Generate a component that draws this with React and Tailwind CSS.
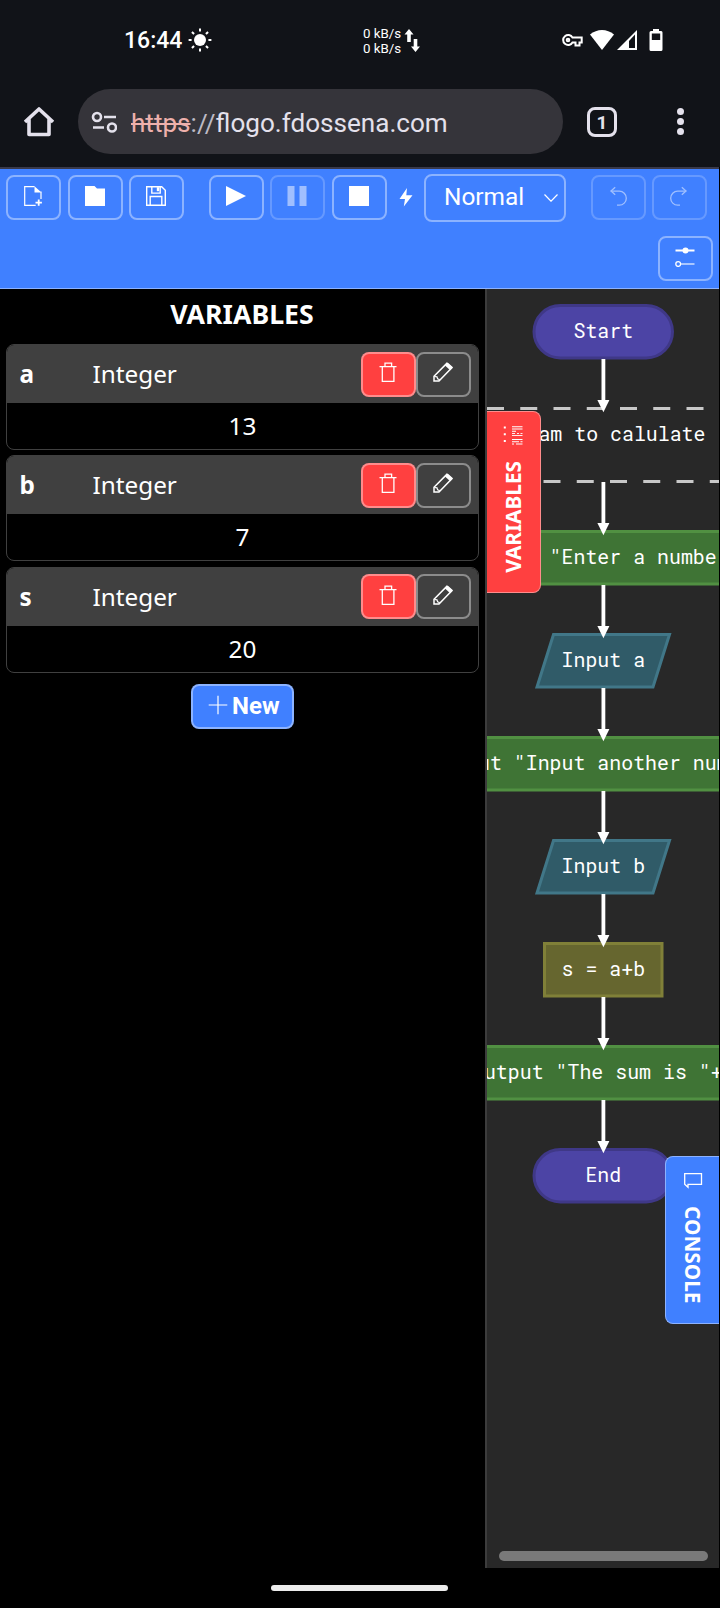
import React from "react";

const paths = {
  file: (
    <g fill="none" stroke="currentColor" strokeWidth="1.2">
      <path d="M11.500 .7H1.700v18.600h11M18 13V5.500" />
      <path d="M11.500 .2v6.200h7z" fill="currentColor" stroke="none" />
      <path d="M15.700 13.500v6.300M12.500 16.600h6.400" strokeWidth="1.8" />
    </g>
  ),
  folder: <path d="M0 0h9.500l2.500 2.500h8V20H0z" fill="currentColor" />,
  save: (
    <g fill="none" stroke="currentColor" strokeWidth="1.4">
      <path d="M.7.7h15l3.600 3.600v15H.7z" />
      <path d="M5.800.7v6.400h8.400V.7M4.200 19.300v-8.800h11.600v8.800" />
      <path d="M10.800 1.200h2.400v4h-2.400z" fill="currentColor" stroke="none" />
    </g>
  ),
  play: <path d="M0 0l20 10L0 20z" fill="currentColor" />,
  pause: <path d="M.5 0h7v20h-7zM12.500 0h7v20h-7z" fill="currentColor" />,
  stop: <path d="M0 0h20v20H0z" fill="currentColor" />,
  undo: (
    <g fill="none" stroke="currentColor" strokeWidth="1.3">
      <path d="M2.800 5.200h8.500a7 7 0 0 1 0 14H9" />
      <path d="M7.200 1.200L3 5l4.200 3.800" />
    </g>
  ),
  redo: (
    <g fill="none" stroke="currentColor" strokeWidth="1.3">
      <path d="M17.200 5.200H8.700a7 7 0 0 0 0 14H11" />
      <path d="M12.800 1.200L17 5l-4.200 3.800" />
    </g>
  ),
  sliders: (
    <g fill="none" stroke="currentColor">
      <path d="M.5 3.500h19" strokeWidth="2" />
      <circle cx="10.500" cy="3.500" r="3" fill="currentColor" stroke="none" />
      <circle cx="3.200" cy="17" r="2.400" strokeWidth="1.300" />
      <path d="M5.600 17h13.900" strokeWidth="1.100" />
    </g>
  ),
  trash: (
    <g fill="none" stroke="currentColor" strokeWidth="1.3">
      <path d="M1.500 4.600h17M7 4.400V1.200h6.600v3.200M4.300 4.600v14.700h11.600V4.600" />
    </g>
  ),
  pencil: (
    <g fill="none" stroke="currentColor" strokeWidth="1.5">
      <path d="M1 19v-4.700L13.800 1.400l5 4.400L6 18.900z" />
      <path d="M12 3.400l2.600-3L20 5.200l-2.800 3z" fill="currentColor" stroke="none" />
      <path d="M1.400 14.500l2.600.3.6 2 1.600.6.2 1.400" strokeWidth="1.2" />
    </g>
  ),
  plus: <path d="M10 .7v18.600M.7 10h18.600" stroke="currentColor" strokeWidth="1.200" />,
};

function Icon({ name, className = "size-5" }) {
  return (
    <svg viewBox="0 0 20 20" className={className}>
      {paths[name]}
    </svg>
  );
}

function IconButton({ name, className = "", dim = false }) {
  return (
    <button
      className={`flex h-[45px] w-[55px] shrink-0 items-center justify-center rounded-lg border-2 pr-px pb-[4px] text-white ${
        dim ? "border-white/20" : "border-white/40"
      } ${className}`}
    >
      <span className={dim ? "opacity-50" : ""}>
        <Icon name={name} />
      </span>
    </button>
  );
}

function StatusBar() {
  return (
    <div className="flex h-20 items-center pl-[124px] pr-[57px] text-white">
      <span className="w-[59px] whitespace-nowrap pt-px text-[23px] leading-none font-medium">16:44</span>
      <svg viewBox="-12 -12 24 24" className="ml-[5px] size-6">
        <circle r="6" fill="#fff" />
        <g stroke="#fff" strokeWidth="2">
          {[0, 45, 90, 135, 180, 225, 270, 315].map((a) => (
            <path key={a} d="M8.400 0h3" transform={`rotate(${a})`} />
          ))}
        </g>
      </svg>
      <div className="ml-[151px] w-[38px] whitespace-nowrap pt-[2px] text-[13.300px] leading-[15px]">
        <div>0 kB/s</div>
        <div>0 kB/s</div>
      </div>
      <svg viewBox="0 0 17 24" className="ml-[3px] h-6 w-[17px]" fill="#fff">
        <path d="M5 1L9.500 6.500H6.800V14H3.200V6.500H0.500z" />
        <path d="M11.500 24L7 18.500H9.700V11H13.300V18.500H16z" />
      </svg>
      <div className="ml-auto flex items-center">
        <svg viewBox="0 0 21 14" className="h-[14px] w-[21px]" fill="none" stroke="#fff" strokeWidth="2">
          <path d="M10.500 4.500A5 5 0 1 0 10.500 9.500H13.500V12.500H17.500V9.500H19.700V4.500z" />
          <circle cx="6" cy="7" r="1.300" />
        </svg>
        <svg viewBox="0 0 24 20" className="ml-[7px] h-5 w-6" fill="#fff">
          <path d="M0 4.500C7-1.500 17-1.500 24 4.500L12 20z" />
        </svg>
        <svg viewBox="0 0 20 20" className="ml-[3px] size-5">
          <path d="M0 20L20 0V20z" fill="#fff" />
          <path d="M12 11L18 4.500V18H12z" fill="#111318" />
        </svg>
        <svg viewBox="0 0 14 22" className="ml-[12px] h-[22px] w-[14px]">
          <path d="M4 0h6v2h2.200q1.300 0 1.300 1.500v17q0 1.500-1.500 1.500h-10q-1.500 0-1.500-1.500v-17q0-1.500 1.500-1.500H4z" fill="#fff" />
          <path d="M2.800 4.500h8.400v6.500H2.800z" fill="#111318" />
        </svg>
      </div>
    </div>
  );
}

function AddressBar() {
  return (
    <div className="flex h-[87px] items-start pt-[9px] text-[#e4e1ec]">
      <svg viewBox="0 0 30 30" className="mt-[18px] ml-6 size-[30px]" fill="none" stroke="currentColor" strokeWidth="3.600" strokeLinejoin="round">
        <path d="M1 15L15 2l14 13M5 11.500V27.500H25V11.500" />
      </svg>
      <div className="ml-6 flex h-[65px] w-[485px] items-center rounded-full bg-[#35343a]">
        <svg viewBox="0 0 26 22" className="ml-[13px] h-[22px] w-[26px]" fill="none" stroke="currentColor" strokeWidth="2.600">
          <circle cx="6" cy="6" r="4" />
          <path d="M13 6H25M2 16.500H13" />
          <circle cx="21" cy="16.500" r="4" />
        </svg>
        <span className="ml-[14px] whitespace-nowrap pt-[3px] text-[26.100px] leading-none">
          <span className="text-[#eeb0ac] line-through decoration-[1.500px]">https</span>
          <span className="text-[#bdbac4]">://</span>
          flogo.fdossena.com
        </span>
      </div>
      <div className="mt-[18px] ml-6 flex size-[30px] items-center justify-center rounded-[8px] border-3 border-current text-[19px] leading-none font-bold">
        1
      </div>
      <div className="mt-[19px] ml-[60px] flex flex-col gap-[3px]">
        <i className="size-[7px] rounded-full bg-current" />
        <i className="size-[7px] rounded-full bg-current" />
        <i className="size-[7px] rounded-full bg-current" />
      </div>
    </div>
  );
}

function Toolbar() {
  return (
    <div className="h-[122px] border-t-2 border-b border-t-[#39394a] border-b-[#8cb2ff] bg-[#4080ff] px-[6px] pt-[5px]">
      <div className="flex h-[48px] items-center">
        <div className="mb-px flex">
          <IconButton name="file" />
          <IconButton name="folder" className="ml-[7px]" />
          <IconButton name="save" className="ml-[6px]" />
          <IconButton name="play" className="ml-[25px]" />
          <IconButton name="pause" className="ml-[6px]" dim />
          <IconButton name="stop" className="ml-[7px]" />
        </div>
        <svg viewBox="0 0 14 20" className="mr-[11px] mb-[2px] ml-[12px] h-5 w-[14px]" fill="#fff">
          <path d="M8 1L0.500 12H6L4.800 19.500L13.500 8.300H7.300z" />
        </svg>
        <div className="flex h-[48px] w-[142px] items-center rounded-lg border-2 border-white/40 pr-[6px] pb-px pl-[18px] text-[24.400px] text-white">
          Normal
          <svg viewBox="0 0 14 8" className="mt-px ml-auto h-2 w-[14px]" fill="none" stroke="#fff" strokeWidth="1.200">
            <path d="M.5 .5L7 7.200L13.500 .5" />
          </svg>
        </div>
        <div className="mb-px flex">
          <IconButton name="undo" className="ml-[25px]" dim />
          <IconButton name="redo" className="ml-[6px]" dim />
        </div>
      </div>
      <div className="mt-[14px] flex justify-end">
        <IconButton name="sliders" />
      </div>
    </div>
  );
}

function Variable({ name, value }) {
  return (
    <div className="h-[106px] w-[473px] overflow-hidden rounded-lg border border-[#404040]">
      <div className="flex h-[58px] items-center bg-[#404040] pr-[7px] pl-[13px] text-[24.300px]">
        <b className="w-[73px]">{name}</b>
        <span className="grow">Integer</span>
        <IconButton name="trash" className="bg-[#ff4040]" />
        <IconButton name="pencil" />
      </div>
      <div className="pt-[5px] pl-px text-center text-[24.300px] leading-9">{value}</div>
    </div>
  );
}

function VariablesPanel() {
  return (
    <div className="flex w-[487px] shrink-0 flex-col items-center border-r-2 border-[#3c3c3c] bg-black pr-px font-['Noto_Sans',sans-serif] text-white">
      <h1 className="pt-[7px] text-[26.700px] leading-[36px] font-bold">VARIABLES</h1>
      <div className="mt-[12px] flex flex-col gap-[5.400px]">
        <Variable name="a" value="13" />
        <Variable name="b" value="7" />
        <Variable name="s" value="20" />
      </div>
      <button className="mt-[11px] ml-px flex h-[45px] w-[103px] items-center rounded-lg border-2 border-white/40 bg-[#4080ff] pl-[15px] font-['Roboto',sans-serif] text-2xl font-bold">
        <Icon name="plus" className="mr-1 mb-[2px] size-5" />
        New
      </button>
    </div>
  );
}

function Arrow({ y }) {
  return (
    <g fill="#fff">
      <path d={`M114.500 ${y}h3.800v44h-3.800z`} />
      <path d={`M110.400 ${y + 41}h12L116.400 ${y + 53.3}z`} />
    </g>
  );
}

function Label({ y, x = 116.3, anchor = "middle", children }) {
  return (
    <text x={x} y={y} textAnchor={anchor} fill="#fff" xmlSpace="preserve">
      {children}
    </text>
  );
}

function Output({ y, children }) {
  return (
    <g>
      <rect x="-60" y={y + 1.5} width="353" height="52.500" fill="#3f7435" stroke="#519042" strokeWidth="3" />
      <Label y={y + 34}>{children}</Label>
    </g>
  );
}

function Input({ y, children }) {
  return (
    <g>
      <path d={`M66.500 ${y + 1.5}H182.500L166 ${y + 54}H50z`} fill="#305b68" stroke="#417788" strokeWidth="3" />
      <Label y={y + 34}>{children}</Label>
    </g>
  );
}

function Terminal({ y, children }) {
  return (
    <g>
      <rect x="47" y={y + 1.5} width="138.500" height="52.500" rx="26.250" fill="#4c44a5" stroke="#3f3887" strokeWidth="3" />
      <Label y={y + 34}>{children}</Label>
    </g>
  );
}

function Flowchart() {
  return (
    <svg viewBox="0 0 232 1230" className="block h-[1230px] w-[232px] font-['Roboto_Mono','DejaVu_Sans_Mono',monospace] text-[19.900px]">
      <Terminal y={15}>Start</Terminal>
      <g stroke="#c8c8c8" strokeWidth="3" strokeDasharray="17 16.250">
        <path d="M0 119.500H232" />
        <path d="M-10 192.500H232" />
      </g>
      <Label x={-8.3} y={152} anchor="start">Program to calulate</Label>
      <Output y={241}>Output "Enter a number"</Output>
      <Input y={344}>Input a</Input>
      <Output y={447}>Output "Input another number"</Output>
      <Input y={550}>Input b</Input>
      <rect x="57.500" y="654.500" width="117.500" height="52.500" fill="#66662f" stroke="#808038" strokeWidth="3" />
      <Label y={687}>s = a+b</Label>
      <Output y={756}>Output "The sum is "+s</Output>
      <Terminal y={859}>End</Terminal>
      {[70, 193, 296, 399, 502, 605, 708, 811].map((y) => (
        <Arrow key={y} y={y} />
      ))}
    </svg>
  );
}

function VariablesTab() {
  return (
    <div className="absolute top-[122px] left-0 flex h-[182px] w-[54px] flex-col items-center rounded-r-lg border border-l-0 border-[#ff8c8c] bg-[#ff4040] pt-[13px] pr-px">
      <svg viewBox="0 0 20 20" className="size-5" fill="none" stroke="#fff" strokeWidth="1.100">
        <path d="M.8 2.500h2M.8 9.300h2M.8 16h2" strokeWidth="2" />
        <path d="M9 1.700h10.500M9 4h10.500M9 6.200h4" />
        <path d="M9 8.500h3M14 8.500h2M17.500 8.500h2M9 10.500h10.500" strokeWidth=".9" />
        <path d="M9 14.500h10.500M9 16.700h7M17.500 16.700h2M9 19h2M13 19h6.500" />
      </svg>
      <span className="mt-[16px] rotate-180 text-[20.800px] leading-7 font-bold text-white [writing-mode:vertical-rl]">
        VARIABLES
      </span>
    </div>
  );
}

function ConsoleTab() {
  return (
    <div className="absolute top-[867px] right-0 flex h-[168px] w-[54px] flex-col items-center rounded-l-lg border border-r-0 border-[#8cb2ff] bg-[#4080ff] pt-[15px]">
      <svg viewBox="0 0 20 17" className="h-[17px] w-5" fill="none" stroke="#fff" strokeWidth="1.300">
        <path d="M1.700 1.700H18.500V12.300H5V15.300L1.700 12.300z" />
      </svg>
      <span className="mt-[17px] text-[20.800px] leading-7 font-bold text-white [writing-mode:vertical-rl]">
        CONSOLE
      </span>
    </div>
  );
}

function Canvas() {
  return (
    <div className="relative w-[232px] overflow-hidden bg-[#282828] font-['Noto_Sans',sans-serif]">
      <Flowchart />
      <VariablesTab />
      <ConsoleTab />
      <div className="absolute bottom-[7px] left-[12px] h-[10px] w-[209px] rounded-full bg-[#797979]" />
    </div>
  );
}

export default function App() {
  return (
    <div className="h-[1608px] w-[720px] overflow-hidden bg-black font-['Roboto',sans-serif]">
      <div className="bg-[#111318]">
        <StatusBar />
        <AddressBar />
      </div>
      <div className="w-[719px]">
        <Toolbar />
        <div className="flex h-[1279px]">
          <VariablesPanel />
          <Canvas />
        </div>
      </div>
      <div className="mt-[17px] ml-[271px] h-[6px] w-[177px] rounded-full bg-[#ececec]" />
    </div>
  );
}
